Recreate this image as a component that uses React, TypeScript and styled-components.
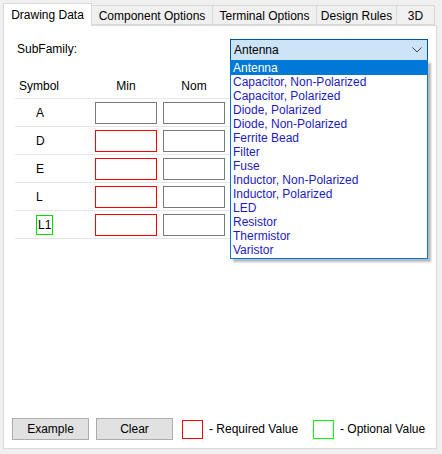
import React from "react";
import styled, { createGlobalStyle } from "styled-components";

const GlobalStyle = createGlobalStyle`
    html, body {
        margin: 0;
        padding: 0;
        background: #f0f0f0;
    }
    body {
        font-family: "Liberation Sans", Arial, sans-serif;
        font-size: 12px;
        color: #000;
    }
`;

const Window = styled.div`
    width: 442px;
    height: 454px;
    box-sizing: border-box;
    padding: 2px 5px 5px 3px;
    display: flex;
    flex-direction: column;
`;

const TabStrip = styled.div`
    display: flex;
    align-items: flex-end;
    height: 23px;
    position: relative;
    z-index: 2;
`;

const Tab = styled.div<{ $active?: boolean; $w: number }>`
    flex-shrink: 0;
    box-sizing: border-box;
    height: ${(p) => (p.$active ? "23px" : "20px")};
    margin-bottom: ${(p) => (p.$active ? "-1px" : "0")};
    width: ${(p) => p.$w}px;
    padding-top: ${(p) => (p.$active ? "0" : "1px")};
    display: flex;
    align-items: center;
    justify-content: center;
    background: ${(p) => (p.$active ? "#fff" : "#f0f0f0")};
    border: 1px solid #d9d9d9;
    border-bottom: ${(p) => (p.$active ? "none" : "1px solid #d9d9d9")};
    border-left: ${(p) => (p.$active ? "1px solid #d9d9d9" : "none")};
    white-space: nowrap;
`;

const Panel = styled.div`
    flex: 1;
    background: #fff;
    border: 1px solid #d9d9d9;
    display: flex;
    flex-direction: column;
    padding: 13px 8px 8px 8px;
    box-sizing: border-box;
`;

const FamilyRow = styled.div`
    display: flex;
    align-items: flex-start;
    justify-content: space-between;
    padding-left: 5px;
`;

const Label = styled.span`
    margin-top: 3px;
`;

const ComboWrap = styled.div`
    position: relative;
    width: 198px;
`;

const Combo = styled.div`
    box-sizing: border-box;
    height: 22px;
    background: #cce4f7;
    border: 1px solid #005499;
    display: flex;
    align-items: center;
    justify-content: space-between;
    padding: 0 5px 0 3px;
`;

const ListBox = styled.div`
    position: absolute;
    left: 0;
    top: 21px;
    width: 198px;
    box-sizing: border-box;
    background: #fff;
    border: 1px solid #0078d7;
    box-shadow: 3px 3px 2px rgba(0, 0, 0, 0.28);
    padding-bottom: 1px;
    z-index: 5;
`;

const ListItem = styled.div<{ $selected?: boolean }>`
    height: 14px;
    line-height: 14px;
    padding-left: 2px;
    white-space: nowrap;
    background: ${(p) => (p.$selected ? "#0078d7" : "transparent")};
    color: ${(p) => (p.$selected ? "#fff" : "#1c1cc0")};
`;

const Table = styled.div`
    margin-top: 12px;
    padding-left: 3px;
    width: 413px;
`;

const HeaderRow = styled.div`
    display: flex;
    height: 26px;
    box-sizing: border-box;
    padding-top: 6px;
    align-items: flex-start;
    border-bottom: 1px solid #e6e6e6;
`;

const HeaderCell = styled.div<{ $w: number; $center?: boolean }>`
    width: ${(p) => p.$w}px;
    line-height: 14px;
    text-align: ${(p) => (p.$center ? "center" : "left")};
    padding-left: ${(p) => (p.$center ? "0" : "4px")};
    box-sizing: border-box;
    margin-right: ${(p) => (p.$center ? "6px" : "0")};
`;

const Row = styled.div`
    display: flex;
    align-items: flex-start;
    height: 28px;
    box-sizing: border-box;
    border-bottom: 1px solid #e6e6e6;
    padding-top: 3px;
`;

const SymbolCell = styled.div`
    width: 80px;
    height: 22px;
    display: flex;
    align-items: center;
    padding-left: 21px;
    box-sizing: border-box;
`;

const SymbolTag = styled.span<{ $optional?: boolean }>`
    display: inline-block;
    box-sizing: border-box;
    height: ${(p) => (p.$optional ? "20px" : "auto")};
    line-height: 18px;
    padding: ${(p) => (p.$optional ? "0 1px" : "0")};
    border: ${(p) => (p.$optional ? "1px solid #00e000" : "none")};
`;

const Field = styled.div<{ $required?: boolean }>`
    width: 62px;
    height: 22px;
    box-sizing: border-box;
    margin-right: 6px;
    background: #fff;
    border: 1px solid ${(p) => (p.$required ? "#ff0000" : "#7a7a7a")};
`;

const BottomBar = styled.div`
    margin-top: auto;
    display: flex;
    align-items: center;
`;

const Button = styled.div`
    width: 77px;
    height: 22px;
    box-sizing: border-box;
    background: #e1e1e1;
    border: 1px solid #adadad;
    display: flex;
    align-items: center;
    justify-content: center;
    margin-right: 7px;
`;

const Swatch = styled.div<{ $color: string }>`
    width: 21px;
    height: 19px;
    box-sizing: border-box;
    border: 1px solid ${(p) => p.$color};
    margin: 0 6px 0 2px;
`;

const Legend = styled.span<{ $w?: number }>`
    width: ${(p) => (p.$w ? `${p.$w}px` : "auto")};
    white-space: nowrap;
`;

const tabs = [
    { name: "Drawing Data", w: 89 },
    { name: "Component Options", w: 121 },
    { name: "Terminal Options", w: 104 },
    { name: "Design Rules", w: 80 },
    { name: "3D", w: 38 },
];

const families = [
    "Antenna",
    "Capacitor, Non-Polarized",
    "Capacitor, Polarized",
    "Diode, Polarized",
    "Diode, Non-Polarized",
    "Ferrite Bead",
    "Filter",
    "Fuse",
    "Inductor, Non-Polarized",
    "Inductor, Polarized",
    "LED",
    "Resistor",
    "Thermistor",
    "Varistor",
];

const rows = [
    { sym: "A", required: false, optional: false },
    { sym: "D", required: true, optional: false },
    { sym: "E", required: true, optional: false },
    { sym: "L", required: true, optional: false },
    { sym: "L1", required: true, optional: true },
];

export default function App() {
    return (
        <>
            <GlobalStyle />
            <Window>
                <TabStrip>
                    {tabs.map((t, i) => (
                        <Tab key={t.name} $active={i === 0} $w={t.w}>
                            {t.name}
                        </Tab>
                    ))}
                </TabStrip>
                <Panel>
                    <FamilyRow>
                        <Label>SubFamily:</Label>
                        <ComboWrap>
                            <Combo>
                                <span>Antenna</span>
                                <svg width="10" height="6" viewBox="0 0 10 6">
                                    <polyline points="0.5,0.5 5,5 9.5,0.5" fill="none" stroke="#444" strokeWidth="1" />
                                </svg>
                            </Combo>
                            <ListBox>
                                {families.map((f, i) => (
                                    <ListItem key={f} $selected={i === 0}>
                                        {f}
                                    </ListItem>
                                ))}
                            </ListBox>
                        </ComboWrap>
                    </FamilyRow>
                    <Table>
                        <HeaderRow>
                            <HeaderCell $w={80}>Symbol</HeaderCell>
                            <HeaderCell $w={62} $center>Min</HeaderCell>
                            <HeaderCell $w={62} $center>Nom</HeaderCell>
                        </HeaderRow>
                        {rows.map((r) => (
                            <Row key={r.sym}>
                                <SymbolCell>
                                    <SymbolTag $optional={r.optional}>{r.sym}</SymbolTag>
                                </SymbolCell>
                                <Field $required={r.required} />
                                <Field />
                            </Row>
                        ))}
                    </Table>
                    <BottomBar>
                        <Button>Example</Button>
                        <Button>Clear</Button>
                        <Swatch $color="#ff0000" />
                        <Legend $w={102}>- Required Value</Legend>
                        <Swatch $color="#00ff00" />
                        <Legend>- Optional Value</Legend>
                    </BottomBar>
                </Panel>
            </Window>
        </>
    );
}
